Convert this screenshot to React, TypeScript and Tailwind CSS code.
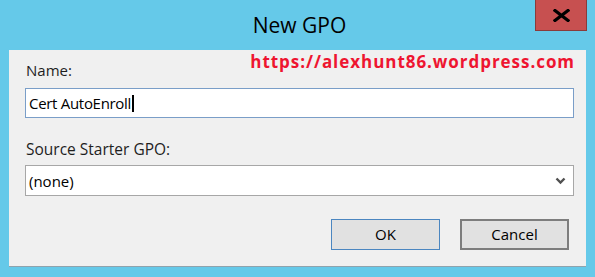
export default function App() {
  const ui = { fontFamily: '"Open Sans", "Noto Sans", sans-serif' }

  return (
    <div className="w-[595px] h-[277px] bg-[#65c9e9] flex flex-col overflow-hidden" style={ui}>
      {/* Title bar */}
      <div className="h-[50px] grid grid-cols-[1fr_auto_1fr] shrink-0">
        <div />
        <div className="text-[21px] leading-[50px] text-black pl-[4px]">New GPO</div>
        <div className="flex justify-end items-start pr-[8px]">
          <button className="w-[52px] h-[31px] bg-[#c75050] border border-[#8a3b3b] border-t-0 flex items-center justify-center">
            <svg width="17" height="13" viewBox="0 0 17 13">
              <path d="M2 1.5 L15 11.5 M15 1.5 L2 11.5" stroke="#000" strokeWidth="3.2" strokeLinecap="square" />
            </svg>
          </button>
        </div>
      </div>

      {/* Client area */}
      <div className="mx-[9px] h-[217px] bg-[#f0f0f0] border-b border-[#8fa3ad] flex flex-col pl-[16px] pr-[12px]">
        <div className="h-[38px] flex">
          <div className="mt-[10px] ml-[1px] text-[15px] leading-[20px] text-[#1e1e1e]">Name:</div>
          <div
            className="ml-auto mr-[-1px] text-[17px] leading-[24px] font-bold tracking-[0.95px] text-[#ee1530]"
            style={{ fontFamily: '"Open Sans", "DejaVu Sans", sans-serif' }}
          >
            https://alexhunt86.wordpress.com
          </div>
        </div>

        <div className="h-[30px] bg-white border border-[#7a9ec8] flex items-center pl-[3px]">
          <span className="text-[15px] leading-[20px] text-black tracking-[-0.3px]">Cert AutoEnroll</span>
          <span className="w-[1.5px] h-[17px] bg-black ml-[1px]" />
        </div>

        <div className="mt-[21px] ml-[1px] text-[15.5px] leading-[20px] text-[#1e1e1e]">Source Starter GPO:</div>

        <div className="mt-[6px] h-[31px] bg-white border border-[#a7a7a7] flex items-center pl-[3px] pr-[7px]">
          <span className="text-[15px] leading-[20px] text-black">(none)</span>
          <svg className="ml-auto" width="11" height="8" viewBox="0 0 11 8">
            <path d="M1.5 1.5 L5.5 5.5 L9.5 1.5" fill="none" stroke="#505050" strokeWidth="2.4" />
          </svg>
        </div>

        <div className="mt-[23px] flex justify-end gap-[20px] pr-[5px]">
          <button className="w-[109px] h-[31px] bg-[#e1e1e1] border border-[#4b86c0] text-[15px] text-black">
            OK
          </button>
          <button className="w-[109px] h-[31px] bg-[#e1e1e1] border-2 border-[#7d7d7d] text-[15px] text-black">
            Cancel
          </button>
        </div>
      </div>
    </div>
  )
}
